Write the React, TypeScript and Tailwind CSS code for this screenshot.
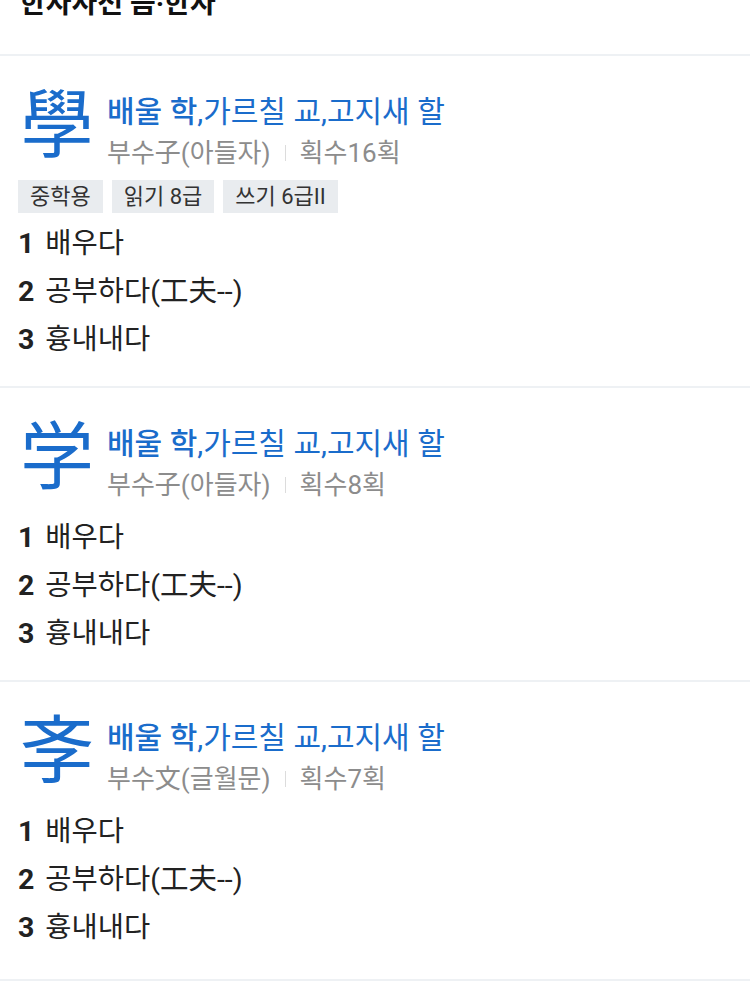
const FONT = "font-['Roboto','Noto_Sans_CJK_KR',sans-serif]";

type Entry = {
  hanja: string;
  meaning: string[];
  radical: string;
  strokes: string;
  tags?: string[];
  defs: string[];
};

const entries: Entry[] = [
  {
    hanja: "學",
    meaning: ["배울 학", ",가르칠 교,고지새 할"],
    radical: "子(아들자)",
    strokes: "16",
    tags: ["중학용", "읽기 8급", "쓰기 6급II"],
    defs: ["배우다", "공부하다(工夫--)", "흉내내다"],
  },
  {
    hanja: "学",
    meaning: ["배울 학", ",가르칠 교,고지새 할"],
    radical: "子(아들자)",
    strokes: "8",
    defs: ["배우다", "공부하다(工夫--)", "흉내내다"],
  },
  {
    hanja: "斈",
    meaning: ["배울 학", ",가르칠 교,고지새 할"],
    radical: "文(글월문)",
    strokes: "7",
    defs: ["배우다", "공부하다(工夫--)", "흉내내다"],
  },
];

function HanjaEntry({ entry }: { entry: Entry }) {
  return (
    <div className="border-b-2 border-[#eef1f4] px-[18px] pt-[32px] pb-[22px] last:pb-[27px]">
      <div className="flex items-start">
        <div className="w-[70px] h-[76px] text-[74px] leading-[76px] text-[#1a6ccb] ml-[2px]">
          {entry.hanja}
        </div>
        <div className="pl-[17px] pt-[4px]">
          <div className="text-[30px] leading-[40px] text-[#1a6ccb]">
            <span className="font-medium">{entry.meaning[0]}</span>
            {entry.meaning[1]}
          </div>
          <div className="flex items-center text-[26px] leading-[42px] text-[#8c8c8c]">
            <span>부수{entry.radical}</span>
            <span className="mx-[14px] h-[16px] w-px bg-[#dcdcdc]" />
            <span>획수{entry.strokes}획</span>
          </div>
        </div>
      </div>
      {entry.tags && (
        <div className="mt-[6px] flex gap-[9px]">
          {entry.tags.map((t) => (
            <span
              key={t}
              className="h-[33px] bg-[#e9ecef] px-[12px] text-[22px] leading-[33px] text-[#333]"
            >
              {t}
            </span>
          ))}
        </div>
      )}
      <div className={entry.tags ? "mt-[7px]" : "mt-[8px]"}>
        {entry.defs.map((d, i) => (
          <div key={d} className="flex text-[28.5px] leading-[48px] text-[#222]">
            <span className="mr-[11px] font-bold">{i + 1}</span>
            <span>{d}</span>
          </div>
        ))}
      </div>
    </div>
  );
}

export default function App() {
  return (
    <div className={`${FONT} bg-white min-h-[984px] overflow-hidden`}>
      <div className="flex h-[56px] flex-col border-b-2 border-[#eef1f4] px-[20px]">
        <div className="-mt-[14px] text-[28px] font-bold leading-[36px] text-[#111]">
          한자사전 음·한자
        </div>
      </div>
      {entries.map((e) => (
        <HanjaEntry key={e.hanja} entry={e} />
      ))}
    </div>
  );
}
